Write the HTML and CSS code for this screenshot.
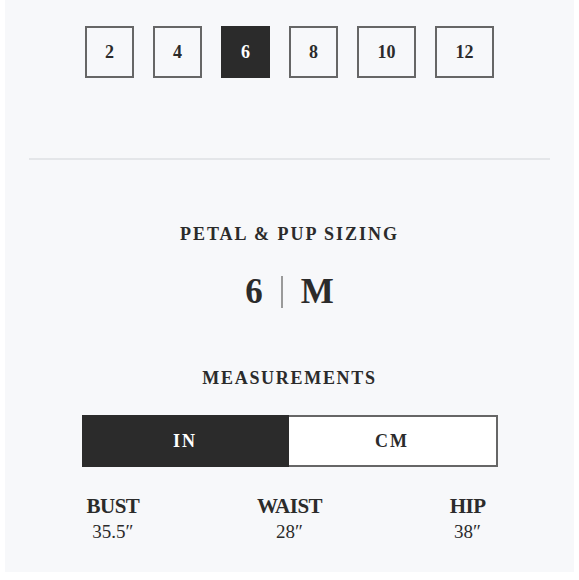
FILE: index.html
```html
<!DOCTYPE html>
<html>
<head>
<meta charset="utf-8">
<link rel="stylesheet" href="styles.css">
</head>
<body>
<div class="panel">
  <div class="sizes">
    <div class="size">2</div>
    <div class="size">4</div>
    <div class="size active">6</div>
    <div class="size">8</div>
    <div class="size wide">10</div>
    <div class="size wide">12</div>
  </div>
  <div class="divider"></div>
  <div class="heading">PETAL &amp; PUP SIZING</div>
  <div class="result"><span>6</span><span class="bar"></span><span>M</span></div>
  <div class="heading meas">MEASUREMENTS</div>
  <div class="toggle">
    <div class="opt on">IN</div>
    <div class="opt">CM</div>
  </div>
  <div class="measures">
    <div class="m first"><div class="lbl">BUST</div><div class="val">35.5″</div></div>
    <div class="m mid"><div class="lbl">WAIST</div><div class="val">28″</div></div>
    <div class="m last"><div class="lbl">HIP</div><div class="val">38″</div></div>
  </div>
</div>
</body>
</html>
```

FILE: styles.css
```css
html, body { margin: 0; padding: 0; background: #ffffff; }
body { font-family: "Liberation Serif", "DejaVu Serif", serif; color: #2b2b2b; }
.panel {
  margin: 0 5px;
  height: 572px;
  background: #f7f8fa;
  display: flex;
  flex-direction: column;
  align-items: center;
  padding-top: 26px;
  box-sizing: border-box;
}
.sizes { display: flex; gap: 19px; }
.size {
  width: 49px; height: 52px;
  box-sizing: border-box;
  border: 2px solid #666;
  display: flex; align-items: center; justify-content: center;
  font-size: 18px; font-weight: bold; color: #2b2b2b;
  background: #f7f8fa;
}
.size.wide { width: 59px; }
.size.active { background: #2b2b2b; border-color: #2b2b2b; color: #fff; }
.divider { align-self: stretch; margin: 80px 24px 0 24px; height: 2px; background: #e4e6e9; }
.heading {
  margin-top: 62px;
  font-size: 18px; font-weight: bold; letter-spacing: 2px;
  line-height: 24px;
}
.result {
  margin-top: 26px;
  display: flex; align-items: center; gap: 18px;
  font-size: 35px; font-weight: bold; line-height: 40px;
}
.bar { width: 2px; height: 32px; background: #9a9a9a; }
.heading.meas { margin-top: 54px; letter-spacing: 1.7px; }
.toggle {
  margin-top: 25px;
  width: 416px; height: 52px;
  display: flex;
  box-sizing: border-box;
  border: 2px solid #666;
  background: #fff;
}
.opt {
  flex: 1;
  display: flex; align-items: center; justify-content: center;
  font-size: 18px; font-weight: bold; letter-spacing: 2px;
}
.opt.on { background: #2b2b2b; color: #fff; margin: -2px 0 -2px -2px; }
.measures {
  margin-top: 26px;
  width: 416px;
  box-sizing: border-box;
  padding: 0 12px 0 5px;
  display: grid;
  grid-template-columns: 1fr auto 1fr;
}
.m { text-align: center; }
.m.first { justify-self: start; }
.m.mid { justify-self: center; margin-left: 7px; }
.m.last { justify-self: end; }
.lbl { font-size: 21px; font-weight: bold; line-height: 26px; letter-spacing: -0.5px; }
.val { font-size: 19px; line-height: 26px; }
```
